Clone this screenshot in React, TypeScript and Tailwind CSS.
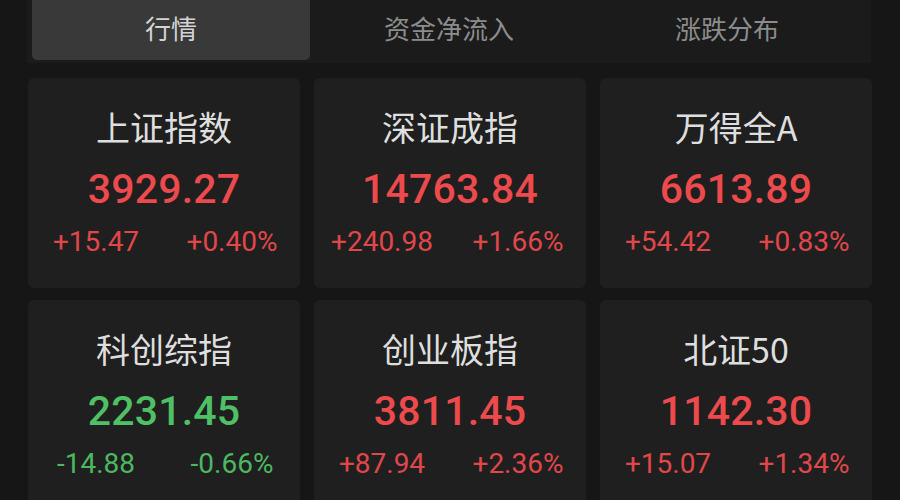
import React from "react";

type Quote = {
  name: string;
  price: string;
  change: string;
  pct: string;
  up: boolean;
};

const quotes: Quote[] = [
  { name: "上证指数", price: "3929.27", change: "+15.47", pct: "+0.40%", up: true },
  { name: "深证成指", price: "14763.84", change: "+240.98", pct: "+1.66%", up: true },
  { name: "万得全A", price: "6613.89", change: "+54.42", pct: "+0.83%", up: true },
  { name: "科创综指", price: "2231.45", change: "-14.88", pct: "-0.66%", up: false },
  { name: "创业板指", price: "3811.45", change: "+87.94", pct: "+2.36%", up: true },
  { name: "北证50", price: "1142.30", change: "+15.07", pct: "+1.34%", up: true },
];

const tabs = ["行情", "资金净流入", "涨跌分布"];

const cjk = { fontFamily: '"Noto Sans CJK SC", "Noto Sans", sans-serif' };
const num = { fontFamily: 'Roboto, "Noto Sans", sans-serif' };

function QuoteCard({ q }: { q: Quote }) {
  const main = q.up ? "text-[#ec4a4c]" : "text-[#4fc065]";
  const sub = q.up ? "text-[#e0474a]" : "text-[#4cb862]";
  return (
    <div className="h-[210px] rounded-[6px] bg-[#1f1f1f] flex flex-col items-center">
      <div
        className="mt-[31px] h-[36px] leading-[36px] text-[34px] text-[#dedede]"
        style={cjk}
      >
        {q.name}
      </div>
      <div
        className={`mt-[24px] h-[40px] leading-[40px] text-[41px] font-medium tracking-[0.2px] ${main}`}
        style={num}
      >
        {q.price}
      </div>
      <div className={`mt-[18px] w-full grid grid-cols-2 text-[28px] leading-[30px] ${sub}`} style={num}>
        <div className="text-center">{q.change}</div>
        <div className="text-center">{q.pct}</div>
      </div>
    </div>
  );
}

export default function App() {
  return (
    <div className="w-[900px] h-[500px] overflow-hidden bg-[#161616]">
      <div className="ml-[27px] w-[844px] h-[63px] bg-[#1b1b1b] px-[5px] flex">
        {tabs.map((t, i) => (
          <div
            key={t}
            className={`flex-1 h-[60px] flex items-center justify-center rounded-b-[5px] text-[26px] pb-[6px] ${
              i === 0 ? "bg-[#393939] text-[#d4d4d4]" : "text-[#8c8c8c]"
            }`}
            style={cjk}
          >
            {t}
          </div>
        ))}
      </div>
      <div className="mt-[15px] px-[28px] grid grid-cols-3 gap-x-[14px] gap-y-[12px]">
        {quotes.map((q) => (
          <QuoteCard key={q.name} q={q} />
        ))}
      </div>
    </div>
  );
}
